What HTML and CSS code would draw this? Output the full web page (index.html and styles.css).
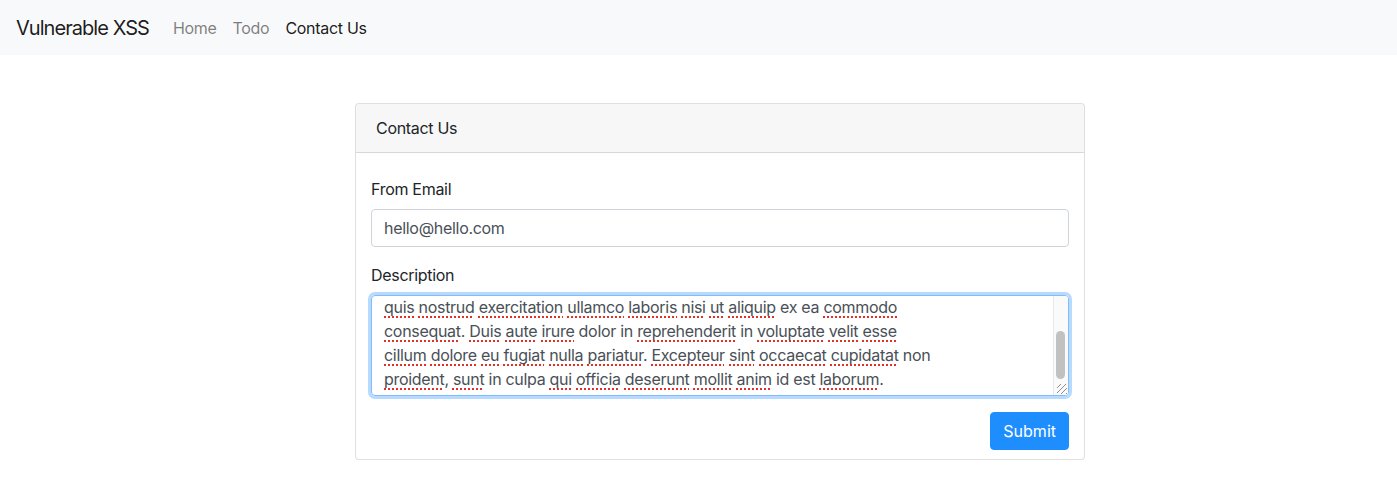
FILE: index.html
```html
<!DOCTYPE html>
<html lang="en">
<head>
<meta charset="utf-8">
<title>Vulnerable XSS</title>
<link rel="stylesheet" href="styles.css">
</head>
<body>
<nav class="navbar">
  <a class="brand" href="#">Vulnerable XSS</a>
  <ul class="nav">
    <li><a class="nav-link" href="#">Home</a></li>
    <li><a class="nav-link" href="#">Todo</a></li>
    <li><a class="nav-link active" href="#">Contact Us</a></li>
  </ul>
</nav>
<main class="main">
  <section class="card">
    <div class="card-header">Contact Us</div>
    <form class="card-body">
      <div class="form-group">
        <label class="label">From Email</label>
        <div class="input">hello@hello.com</div>
      </div>
      <div class="form-group">
        <label class="label">Description</label>
        <div class="textarea focused">
          <div class="ta-scroll"><div class="ta-content"><span class="sp">Lorem</span> <span class="sp">ipsum</span> dolor sit <span class="sp">amet</span>, <span class="sp">consectetur</span> <span class="sp">adipiscing</span> <span class="sp">elit</span>, sed do <span class="sp">eiusmod</span>
<span class="sp">tempor</span> <span class="sp">incididunt</span> ut <span class="sp">labore</span> et <span class="sp">dolore</span> magna <span class="sp">aliqua</span>. Ut <span class="sp">enim</span> ad minim <span class="sp">veniam</span>,
<span class="sp">quis</span> <span class="sp">nostrud</span> <span class="sp">exercitation</span> <span class="sp">ullamco</span> <span class="sp">laboris</span> <span class="sp">nisi</span> <span class="sp">ut</span> <span class="sp">aliquip</span> ex ea <span class="sp">commodo</span>
<span class="sp">consequat</span>. <span class="sp">Duis</span> <span class="sp">aute</span> <span class="sp">irure</span> dolor in <span class="sp">reprehenderit</span> in <span class="sp">voluptate</span> <span class="sp">velit</span> <span class="sp">esse</span>
<span class="sp">cillum</span> <span class="sp">dolore</span> <span class="sp">eu</span> <span class="sp">fugiat</span> <span class="sp">nulla</span> <span class="sp">pariatur</span>. <span class="sp">Excepteur</span> <span class="sp">sint</span> <span class="sp">occaecat</span> <span class="sp">cupidatat</span> non
<span class="sp">proident</span>, <span class="sp">sunt</span> in culpa <span class="sp">qui</span> <span class="sp">officia</span> <span class="sp">deserunt</span> <span class="sp">mollit</span> <span class="sp">anim</span> id est <span class="sp">laborum</span>.</div></div>
          <div class="sb-track"><div class="sb-thumb"></div></div>
          <div class="sb-resizer"></div>
        </div>
      </div>
      <div class="actions">
        <button type="button" class="btn">Submit</button>
      </div>
    </form>
  </section>
</main>
</body>
</html>
```

FILE: styles.css
```css
* { box-sizing: border-box; }
html, body { margin: 0; }
body {
  font-family: Inter, "Liberation Sans", Arial, sans-serif;
  font-size: 16px;
  line-height: 1.5;
  letter-spacing: -0.3px;
  color: #212529;
  background: #fff;
}
a { text-decoration: none; }

.navbar {
  display: flex;
  align-items: center;
  height: 55px;
  padding: 0 16px;
  background: #f8f9fa;
}
.brand {
  font-size: 20px;
  line-height: 30px;
  letter-spacing: -0.95px;
  color: rgba(0,0,0,.9);
  margin-right: 16px;
}
.nav {
  display: flex;
  list-style: none;
  margin: 0;
  padding: 0;
}
.nav-link {
  display: block;
  padding: 8px;
  color: rgba(0,0,0,.5);
}
.nav-link.active { color: rgba(0,0,0,.9); }

.main {
  display: flex;
  justify-content: center;
  padding-left: 43px;
  margin-top: 48px;
}
.card {
  width: 730px;
  border: 1px solid rgba(0,0,0,.125);
  border-radius: 4px;
  background: #fff;
}
.card-header {
  padding: 12px 20px;
  background: rgba(0,0,0,.03);
  border-bottom: 1px solid rgba(0,0,0,.125);
  border-radius: 3px 3px 0 0;
}
.card-body {
  display: block;
  padding: 24px 15px 9px;
}
.form-group { margin-bottom: 16px; }
.label {
  display: block;
  margin-bottom: 8px;
}
.input {
  height: 38px;
  padding: 6px 12px;
  border: 1px solid #ced4da;
  border-radius: 4px;
  color: #495057;
}
.textarea {
  position: relative;
  height: 101px;
  border: 1px solid #ced4da;
  border-radius: 4px;
  color: #495057;
  overflow: hidden;
}
.textarea.focused {
  border-color: #80bdff;
  box-shadow: 0 0 0 3px rgba(0,123,255,.28);
}
.ta-scroll {
  display: flex;
  flex-direction: column;
  justify-content: flex-end;
  height: 100%;
  overflow: hidden;
  padding: 6px 27px 4px 12px;
}
.ta-content {
  white-space: pre;
  flex: none;
}
.sp {
  text-decoration: underline dotted #e0302a;
  text-decoration-thickness: 2px;
  text-underline-offset: 3px;
}
.sb-track {
  position: absolute;
  top: 0;
  right: 0;
  bottom: 14px;
  width: 15px;
  background: #fafafa;
  border-left: 1px solid #e8e8e8;
}
.sb-thumb {
  position: absolute;
  left: 2px;
  right: 3px;
  bottom: 2px;
  height: 48px;
  border-radius: 5px;
  background: #c1c1c1;
}
.sb-resizer {
  position: absolute;
  right: 0;
  bottom: 0;
  width: 15px;
  height: 14px;
  border-left: 1px solid #e8e8e8;
  background:
    repeating-linear-gradient(135deg, transparent 0 2.5px, #8f8f8f 2.5px 3.5px) right 1px bottom 1px / 10px 10px no-repeat,
    #fafafa;
}

.actions {
  display: flex;
  justify-content: flex-end;
}
.btn {
  font: inherit;
  height: 38px;
  padding: 6px 12px;
  border: 1px solid #1e8eff;
  border-radius: 4px;
  background: #1e8eff;
  color: #fff;
  line-height: 24px;
}
```
